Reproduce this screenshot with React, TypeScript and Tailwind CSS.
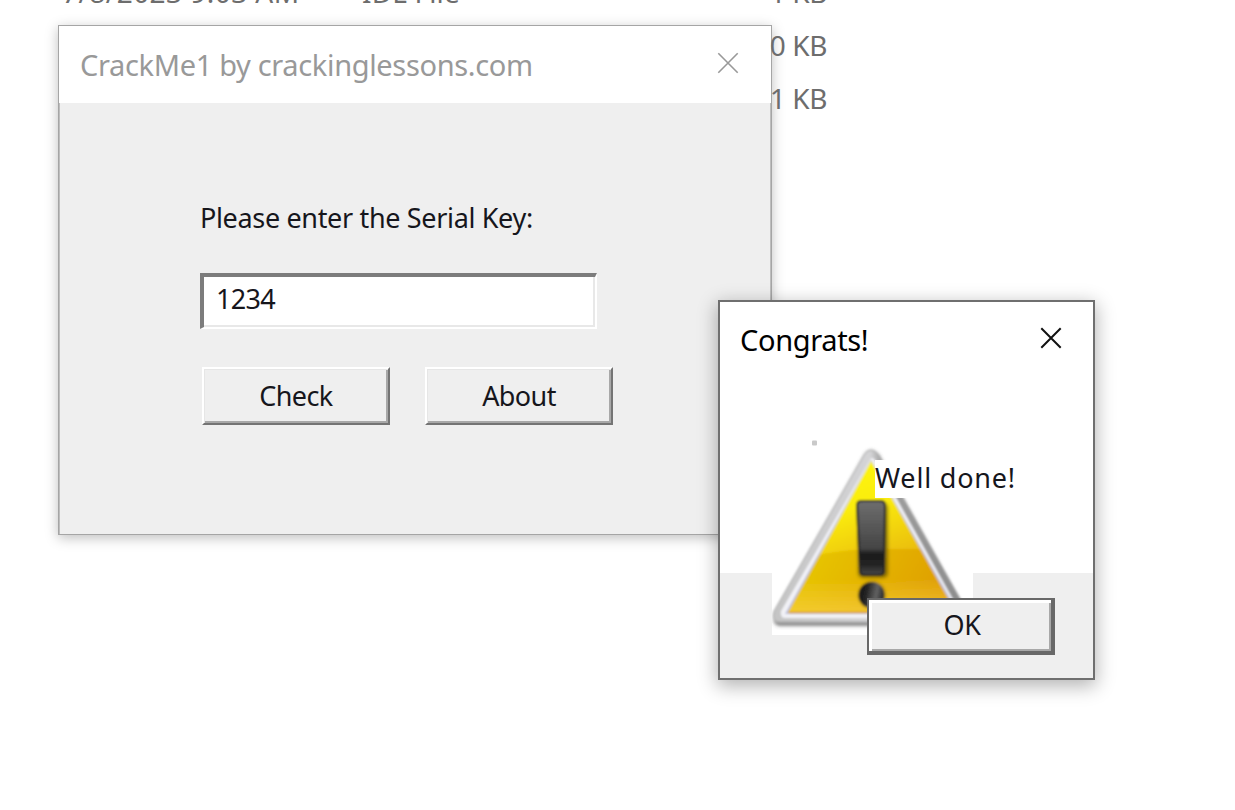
import React from "react";

const rows = [
  { date: "7/8/2023 9:03 AM", type: "IDL File", size: "1 KB" },
  { date: "", type: "", size: "0 KB" },
  { date: "", type: "", size: "1 KB" },
];

function CloseIcon({ className }: { className: string }) {
  return (
    <svg className={className} width="22" height="22" viewBox="0 0 22 22" fill="none" stroke="currentColor">
      <path d="M1.3 1.3L20.7 20.7M20.7 1.3L1.3 20.7" />
    </svg>
  );
}

function FileList() {
  return (
    <div className="relative z-10 -mt-[35px] w-[827px] font-['Noto_Sans',sans-serif] text-[28px] text-[#6d6d6d]">
      {rows.map((row, i) => (
        <div key={i} className="flex h-[53px] items-center whitespace-pre">
          <span className="ml-[62px] w-[300px] tracking-[0.45px]">{row.date}</span>
          <span className="tracking-[0.15px]">{row.type}</span>
          <span className="ml-auto tracking-[-0.4px]">{row.size}</span>
        </div>
      ))}
    </div>
  );
}

function PushButton({ label }: { label: string }) {
  return (
    <button className="flex h-[58px] w-[188px] items-center justify-center border-t-2 border-r-2 border-b-2 border-l-2 border-t-white border-r-[#747474] border-b-[#747474] border-l-white bg-[#efefef] pb-0 shadow-[inset_1px_1px_0_#e6e6e6,inset_-2px_-2px_0_#a8a8a8]">
      {label}
    </button>
  );
}

function WarningIcon() {
  return (
    <svg className="block" width="201" height="198" viewBox="0 0 201 198">
      <defs>
        <linearGradient id="frame" x1="0" y1="0" x2="1" y2="0">
          <stop offset="0" stopColor="#c4c4c4" />
          <stop offset="0.5" stopColor="#d4d4d6" />
          <stop offset="0.56" stopColor="#a0a0a0" />
          <stop offset="1" stopColor="#8b8b8b" />
        </linearGradient>
        <linearGradient id="base" x1="0.3" y1="0" x2="0.65" y2="1">
          <stop offset="0" stopColor="#fffb00" />
          <stop offset="0.35" stopColor="#fbed10" />
          <stop offset="0.75" stopColor="#e4ab08" />
          <stop offset="1" stopColor="#e3a00f" />
        </linearGradient>
        <linearGradient id="lower" x1="0" y1="0" x2="1" y2="0.25">
          <stop offset="0" stopColor="#e8d000" />
          <stop offset="0.5" stopColor="#e4b500" />
          <stop offset="1" stopColor="#de9908" />
        </linearGradient>
        <linearGradient id="glow" x1="0" y1="0" x2="0" y2="1">
          <stop offset="0" stopColor="#f9cf44" stopOpacity="0" />
          <stop offset="1" stopColor="#f9cf44" stopOpacity="0.75" />
        </linearGradient>
        <linearGradient id="bar" x1="0" y1="0" x2="0" y2="1">
          <stop offset="0" stopColor="#6e6e6e" />
          <stop offset="0.64" stopColor="#454545" />
          <stop offset="0.72" stopColor="#1c1c1c" />
          <stop offset="0.85" stopColor="#222" />
          <stop offset="1" stopColor="#4a4a4a" />
        </linearGradient>
        <linearGradient id="dot" x1="0" y1="0" x2="1" y2="0.2">
          <stop offset="0" stopColor="#151515" />
          <stop offset="0.35" stopColor="#222" />
          <stop offset="0.75" stopColor="#626262" />
          <stop offset="1" stopColor="#303030" />
        </linearGradient>
        <filter id="soft" x="-20%" y="-20%" width="140%" height="140%">
          <feGaussianBlur stdDeviation="1.8" />
        </filter>
        <filter id="edge" x="-5%" y="-5%" width="110%" height="110%">
          <feGaussianBlur stdDeviation="0.8" />
        </filter>
        <clipPath id="face">
          <path d="M99 24L16 176H184Z" />
        </clipPath>
      </defs>
      <rect width="201" height="198" fill="#fff" />
      <rect x="40" y="3.500" width="5" height="5" rx="1" fill="#c9c9c9" />
      <g filter="url(#edge)">
        <path d="M93 17Q99 9 107 18L195 177Q197 187 187 189H7Q-1 187 3 177Z" fill="#555" opacity="0.7" filter="url(#soft)" />
        <path d="M92 18Q98 8 107 18L195 174Q198 185 187 185H7Q-1 184 2 174Z" fill="url(#frame)" stroke="#aaa" strokeWidth="1" />
        <path d="M98 23L9 174Q8 181 13 181H188Q191 178 187 173L103 23Q100 19 98 23Z" fill="#f2f2f6" />
        <path d="M99 23L13 177H187Z" fill="#b9bddb" />
        <g clipPath="url(#face)">
          <rect width="201" height="198" fill="url(#base)" />
          <path d="M0 128Q60 112 105 112H201V198H0Z" fill="url(#lower)" />
          <rect y="142" width="201" height="36" fill="url(#glow)" />
        </g>
        <path d="M17 175.500H183" stroke="#dc9a20" strokeWidth="1.500" />
        <rect x="86" y="66" width="30" height="75" rx="5" fill="#4d4300" opacity="0.6" filter="url(#soft)" />
        <path d="M89 64H109Q113 64 113 69L112 134Q112 138 107 138H92Q88 138 88 134L85 69Q85 64 89 64Z" fill="url(#bar)" stroke="#242424" strokeWidth="2" />
        <circle cx="100" cy="158" r="13.500" fill="#4d4300" opacity="0.45" filter="url(#soft)" />
        <circle cx="99.500" cy="158" r="13" fill="url(#dot)" />
      </g>
    </svg>
  );
}

function CrackMeWindow() {
  return (
    <section className="absolute top-[25px] left-[58px] flex h-[510px] w-[714px] flex-col border border-[#a5a5a5] bg-[#efefef] shadow-[0_3px_12px_0_rgba(0,0,0,0.25)]">
      <header className="flex h-[77px] shrink-0 items-start justify-between bg-white pr-[32px] pl-[21px] text-[#999]">
        <h1 className="mt-[19px] whitespace-nowrap font-['Noto_Sans',sans-serif] text-[29px] leading-[40px] tracking-[-0.34px]">
          CrackMe1 by crackinglessons.com
        </h1>
        <CloseIcon className="mt-[26px] stroke-[1.6]" />
      </header>
      <main className="flex flex-1 flex-col border-x border-[#bdbdbd] pl-[140px] font-['Noto_Sans',sans-serif] text-[27px] text-[#16161c]">
        <label className="mt-[95px] whitespace-nowrap leading-[40px] tracking-[-0.34px]">Please enter the Serial Key:</label>
        <div className="mt-[35px] flex h-[56px] w-[397px] items-center border-t-4 border-r-2 border-b-2 border-l-4 border-t-[#7c7c7c] border-r-white border-b-white border-l-[#7c7c7c] bg-white pb-[6px] pl-[12px] tracking-[-0.7px] shadow-[inset_-2px_-2px_0_#e8e8e8]">
          1234
        </div>
        <div className="mt-[38px] ml-[2px] flex gap-[35px] tracking-[-0.6px]">
          <PushButton label="Check" />
          <PushButton label="About" />
        </div>
      </main>
    </section>
  );
}

function CongratsDialog() {
  return (
    <section className="absolute top-[300px] left-[718px] z-20 flex h-[380px] w-[377px] flex-col border-2 border-[#6f6f6f] bg-white shadow-[0_5px_18px_1px_rgba(0,0,0,0.3)]">
      <header className="flex h-[76px] shrink-0 items-start justify-between pr-[31px] pl-[20px]">
        <h2 className="mt-[18px] font-['Noto_Sans',sans-serif] text-[29px] leading-[40px] tracking-[-0.35px] text-black">Congrats!</h2>
        <CloseIcon className="mt-[25px] stroke-2 text-[#111]" />
      </header>
      <div className="flex-1" />
      <footer className="h-[105px] bg-[#efefef]" />
      <div className="absolute top-[135px] left-[52px]">
        <WarningIcon />
      </div>
      <p className="absolute top-[158px] left-[155px] h-[38px] whitespace-nowrap bg-white font-['Noto_Sans',sans-serif] text-[27px] leading-[36px] tracking-[0.8px] text-[#16161c]">
        Well done!
      </p>
      <button className="absolute top-[296px] left-[147px] flex h-[57px] w-[188px] items-center justify-center border-t-2 border-r-4 border-b-4 border-l-2 border-[#686868] bg-[#efefef] pl-[4px] font-['Noto_Sans',sans-serif] text-[27px] tracking-[-0.5px] text-[#16161c] shadow-[inset_3px_3px_0_#fff,inset_-2px_-2px_0_#a8a8a8]">
        OK
      </button>
    </section>
  );
}

export default function App() {
  return (
    <div className="relative h-[810px] w-[1235px] overflow-hidden bg-white">
      <div className="flow-root">
        <FileList />
      </div>
      <CrackMeWindow />
      <CongratsDialog />
    </div>
  );
}
